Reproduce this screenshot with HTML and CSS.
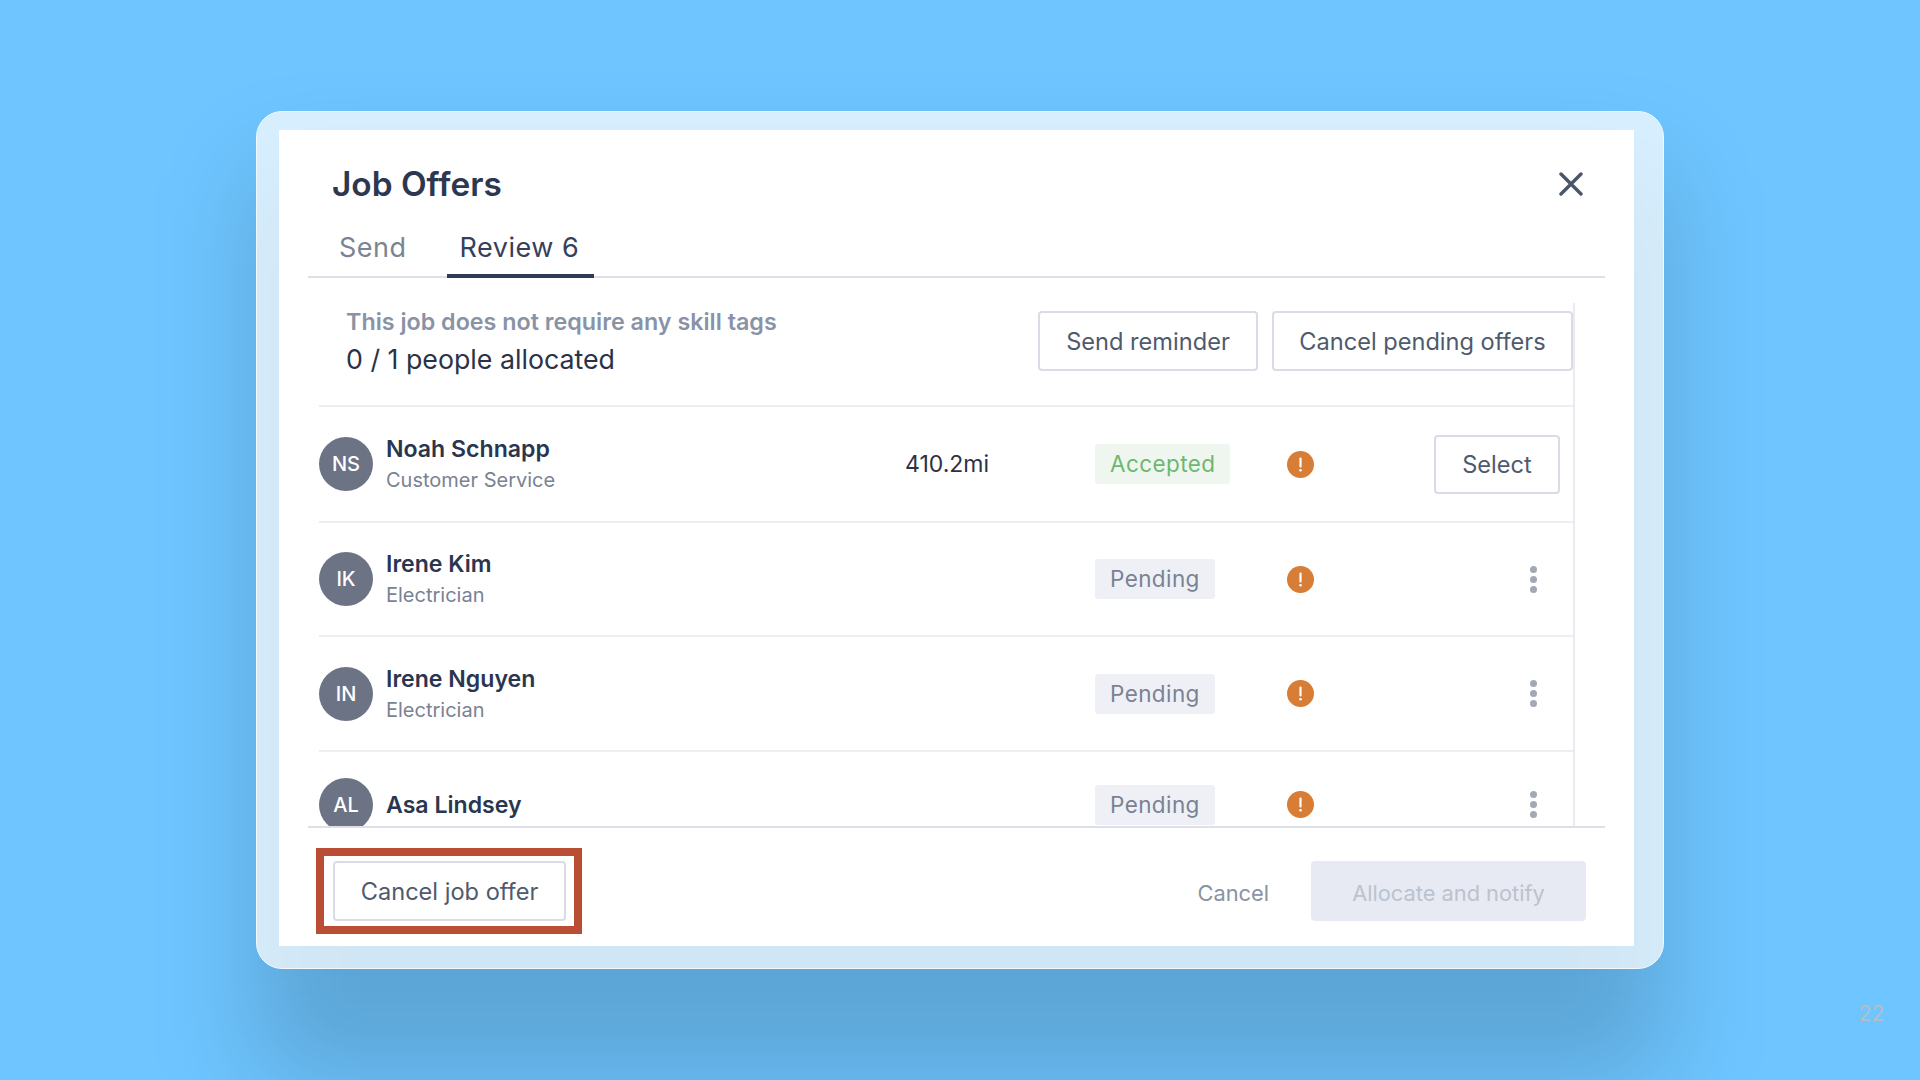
FILE: index.html
```html
<!DOCTYPE html>
<html lang="en">
<head>
<meta charset="utf-8">
<title>Job Offers</title>
<link rel="stylesheet" href="styles.css">
</head>
<body>
<main class="card">
  <section class="panel">
    <header class="head">
      <h1 class="title">Job Offers</h1>
      <button class="close" aria-label="Close">
        <svg viewBox="0 0 24 24" width="24" height="24"><path d="M2 2 22 22M22 2 2 22" fill="none" stroke="#4a5568" stroke-width="3.4" stroke-linecap="round"/></svg>
      </button>
    </header>
    <nav class="tabs">
      <span class="tab">Send</span>
      <span class="tab active">Review 6</span>
    </nav>
    <div class="list">
      <div class="summary">
        <div class="summary-text">
          <p class="skill">This job does not require any skill tags</p>
          <p class="count">0 / 1 people allocated</p>
        </div>
        <div class="summary-actions">
          <button class="btn send">Send reminder</button>
          <button class="btn pending-btn">Cancel pending offers</button>
        </div>
      </div>

      <div class="row r1">
        <div class="person">
          <span class="avatar">NS</span>
          <div class="info"><div class="name">Noah Schnapp</div><div class="role">Customer Service</div></div>
        </div>
        <span class="dist">410.2mi</span>
        <span class="tag accepted">Accepted</span>
        <svg class="alert" viewBox="0 0 27 27"><circle cx="13.5" cy="13.5" r="13.5" fill="#d77d36"/><path d="M13.5 7.5v8" stroke="#fff" stroke-width="2.2" stroke-linecap="round"/><circle cx="13.5" cy="19.2" r="1.3" fill="#fff"/></svg>
        <button class="btn select">Select</button>
      </div>

      <div class="row r2">
        <div class="person">
          <span class="avatar">IK</span>
          <div class="info"><div class="name">Irene Kim</div><div class="role">Electrician</div></div>
        </div>
        <span class="dist"></span>
        <span class="tag">Pending</span>
        <svg class="alert" viewBox="0 0 27 27"><circle cx="13.5" cy="13.5" r="13.5" fill="#d77d36"/><path d="M13.5 7.5v8" stroke="#fff" stroke-width="2.2" stroke-linecap="round"/><circle cx="13.5" cy="19.2" r="1.3" fill="#fff"/></svg>
        <span class="more"><i></i><i></i><i></i></span>
      </div>

      <div class="row r3">
        <div class="person">
          <span class="avatar">IN</span>
          <div class="info"><div class="name">Irene Nguyen</div><div class="role">Electrician</div></div>
        </div>
        <span class="dist"></span>
        <span class="tag">Pending</span>
        <svg class="alert" viewBox="0 0 27 27"><circle cx="13.5" cy="13.5" r="13.5" fill="#d77d36"/><path d="M13.5 7.5v8" stroke="#fff" stroke-width="2.2" stroke-linecap="round"/><circle cx="13.5" cy="19.2" r="1.3" fill="#fff"/></svg>
        <span class="more"><i></i><i></i><i></i></span>
      </div>

      <div class="row r4">
        <div class="person">
          <span class="avatar">AL</span>
          <div class="name">Asa Lindsey</div>
        </div>
        <span class="dist"></span>
        <span class="tag">Pending</span>
        <svg class="alert" viewBox="0 0 27 27"><circle cx="13.5" cy="13.5" r="13.5" fill="#d77d36"/><path d="M13.5 7.5v8" stroke="#fff" stroke-width="2.2" stroke-linecap="round"/><circle cx="13.5" cy="19.2" r="1.3" fill="#fff"/></svg>
        <span class="more"><i></i><i></i><i></i></span>
      </div>
    </div>
    <footer class="foot">
      <div class="highlight"><button class="btn cancel-offer">Cancel job offer</button></div>
      <div class="foot-actions">
        <button class="link">Cancel</button>
        <button class="primary" disabled>Allocate and notify</button>
      </div>
    </footer>
  </section>
</main>
<span class="page-no">22</span>
</body>
</html>
```

FILE: styles.css
```css
* { box-sizing: border-box; margin: 0; padding: 0; }
html, body { height: 100%; }
body {
  margin: 0;
  width: 1920px;
  height: 1080px;
  overflow: hidden;
  background: #6ec5ff;
  display: flex;
  align-items: center;
  justify-content: center;
  font-family: Inter, "Liberation Sans", sans-serif;
  color: #2a3550;
}
button { font-family: inherit; background: none; border: 0; }

.card {
  position: relative;
  width: 1408px;
  height: 858px;
  padding: 18px 29px 22px 22px;
  border-radius: 26px;
  border: 1px solid #f1f9ff;
  background: rgba(255, 255, 255, .72);
}
.card::before {
  content: "";
  position: absolute;
  z-index: -1;
  inset: 60px 0 -110px 0;
  border-radius: 26px;
  background: rgba(0, 0, 0, .16);
  filter: blur(50px);
}

.panel {
  height: 816px;
  background: #fff;
  display: flex;
  flex-direction: column;
}

.head {
  display: flex;
  align-items: center;
  justify-content: space-between;
  padding: 35px 51px 0 53px;
  height: 73px;
}
.title { font-size: 33.4px; line-height: 40px; font-weight: 600; color: #2d3750; }
.close { width: 24px; height: 24px; display: block; }
.close svg { display: block; }

.tabs {
  margin: 0 29px;
  padding-left: 17px;
  height: 75px;
  display: flex;
  gap: 26px;
  align-items: flex-start;
  border-bottom: 2px solid #dde0e8;
}
.tab {
  padding: 25px 14px 0;
  height: 75px;
  line-height: 40px;
  font-size: 27px;
  letter-spacing: .5px;
  color: #7b8494;
  border-bottom: 4px solid transparent;
}
.tab.active {
  padding-left: 13px;
  padding-right: 15px;
  color: #36405a;
  border-bottom-color: #2f3a57;
}

.list {
  flex: 1;
  min-height: 0;
  margin: 25px 59px 0 40px;
  border-right: 2px solid #eaebf0;
  overflow: hidden;
}

.summary {
  height: 104px;
  padding: 8px 0 0 27px;
  display: flex;
  justify-content: space-between;
  align-items: flex-start;
  border-bottom: 2px solid #eceef3;
}
.skill { font-size: 23.3px; line-height: 28px; font-weight: 600; color: #8a93a6; margin-top: -3px; }
.count { font-size: 26.75px; line-height: 34px; color: #2a3247; margin-top: 6px; }
.summary-actions { display: flex; gap: 14px; }

.btn {
  height: 60px;
  border: 2px solid #d9dce6;
  border-radius: 4px;
  background: #fff;
  font-size: 23.6px;
  color: #4f5a6d;
}
.send { width: 220px; }
.pending-btn { width: 301px; }
.select { width: 126px; height: 59px; justify-self: end; }
.cancel-offer { width: 233px; display: block; }

.row {
  display: grid;
  grid-template-columns: 586px 190px 192px 27px 1fr;
  align-items: center;
  padding-right: 13px;
  border-bottom: 2px solid #eceef3;
}
.r1 { height: 116px; }
.r2 { height: 114px; }
.r3 { height: 115px; }
.r4 { height: 105px; border-bottom: 0; }

.person { display: flex; align-items: center; gap: 13px; }
.info { padding-top: 1px; }
.avatar {
  width: 54px;
  height: 54px;
  flex: none;
  border-radius: 50%;
  background: #6b7385;
  color: #fff;
  font-size: 20px;
  font-weight: 500;
  display: flex;
  align-items: center;
  justify-content: center;
}
.name { font-size: 23.1px; line-height: 30px; font-weight: 600; color: #2a3550; }
.role { font-size: 20px; line-height: 30px; color: #7a8294; margin-top: 1px; }
.dist { font-size: 23px; color: #2a3247; }

.tag {
  justify-self: start;
  height: 40px;
  padding: 0 15px;
  border-radius: 3px;
  background: #eef0f5;
  color: #7a8294;
  font-size: 22.5px;
  letter-spacing: .4px;
  line-height: 40px;
}
.tag.accepted { background: #eff6ef; color: #6db870; }

.alert { width: 27px; height: 27px; display: block; }

.more {
  justify-self: end;
  margin-right: 23px;
  display: flex;
  flex-direction: column;
  gap: 3px;
}
.more i { display: block; width: 7px; height: 7px; border-radius: 50%; background: #a3a8b5; }

.foot {
  height: 120px;
  margin: 0 29px;
  padding: 8px 19px 0 8px;
  border-top: 2px solid #dde0e8;
  display: flex;
  align-items: center;
  justify-content: space-between;
}
.highlight { border: 8px solid #b94e35; padding: 5px 8px 5px 9px; }
.foot-actions { display: flex; align-items: center; gap: 42px; }
.link { font-size: 21.8px; color: #8a92a3; padding-top: 3px; }
.primary {
  width: 275px;
  height: 60px;
  border-radius: 4px;
  background: #e7eaf2;
  color: #bcc2cf;
  font-size: 21.8px;
  padding-top: 3px;
}

.page-no {
  position: absolute;
  right: 36px;
  bottom: 54px;
  font-size: 21px;
  line-height: 24px;
  color: #b6bdc4;
}
```
